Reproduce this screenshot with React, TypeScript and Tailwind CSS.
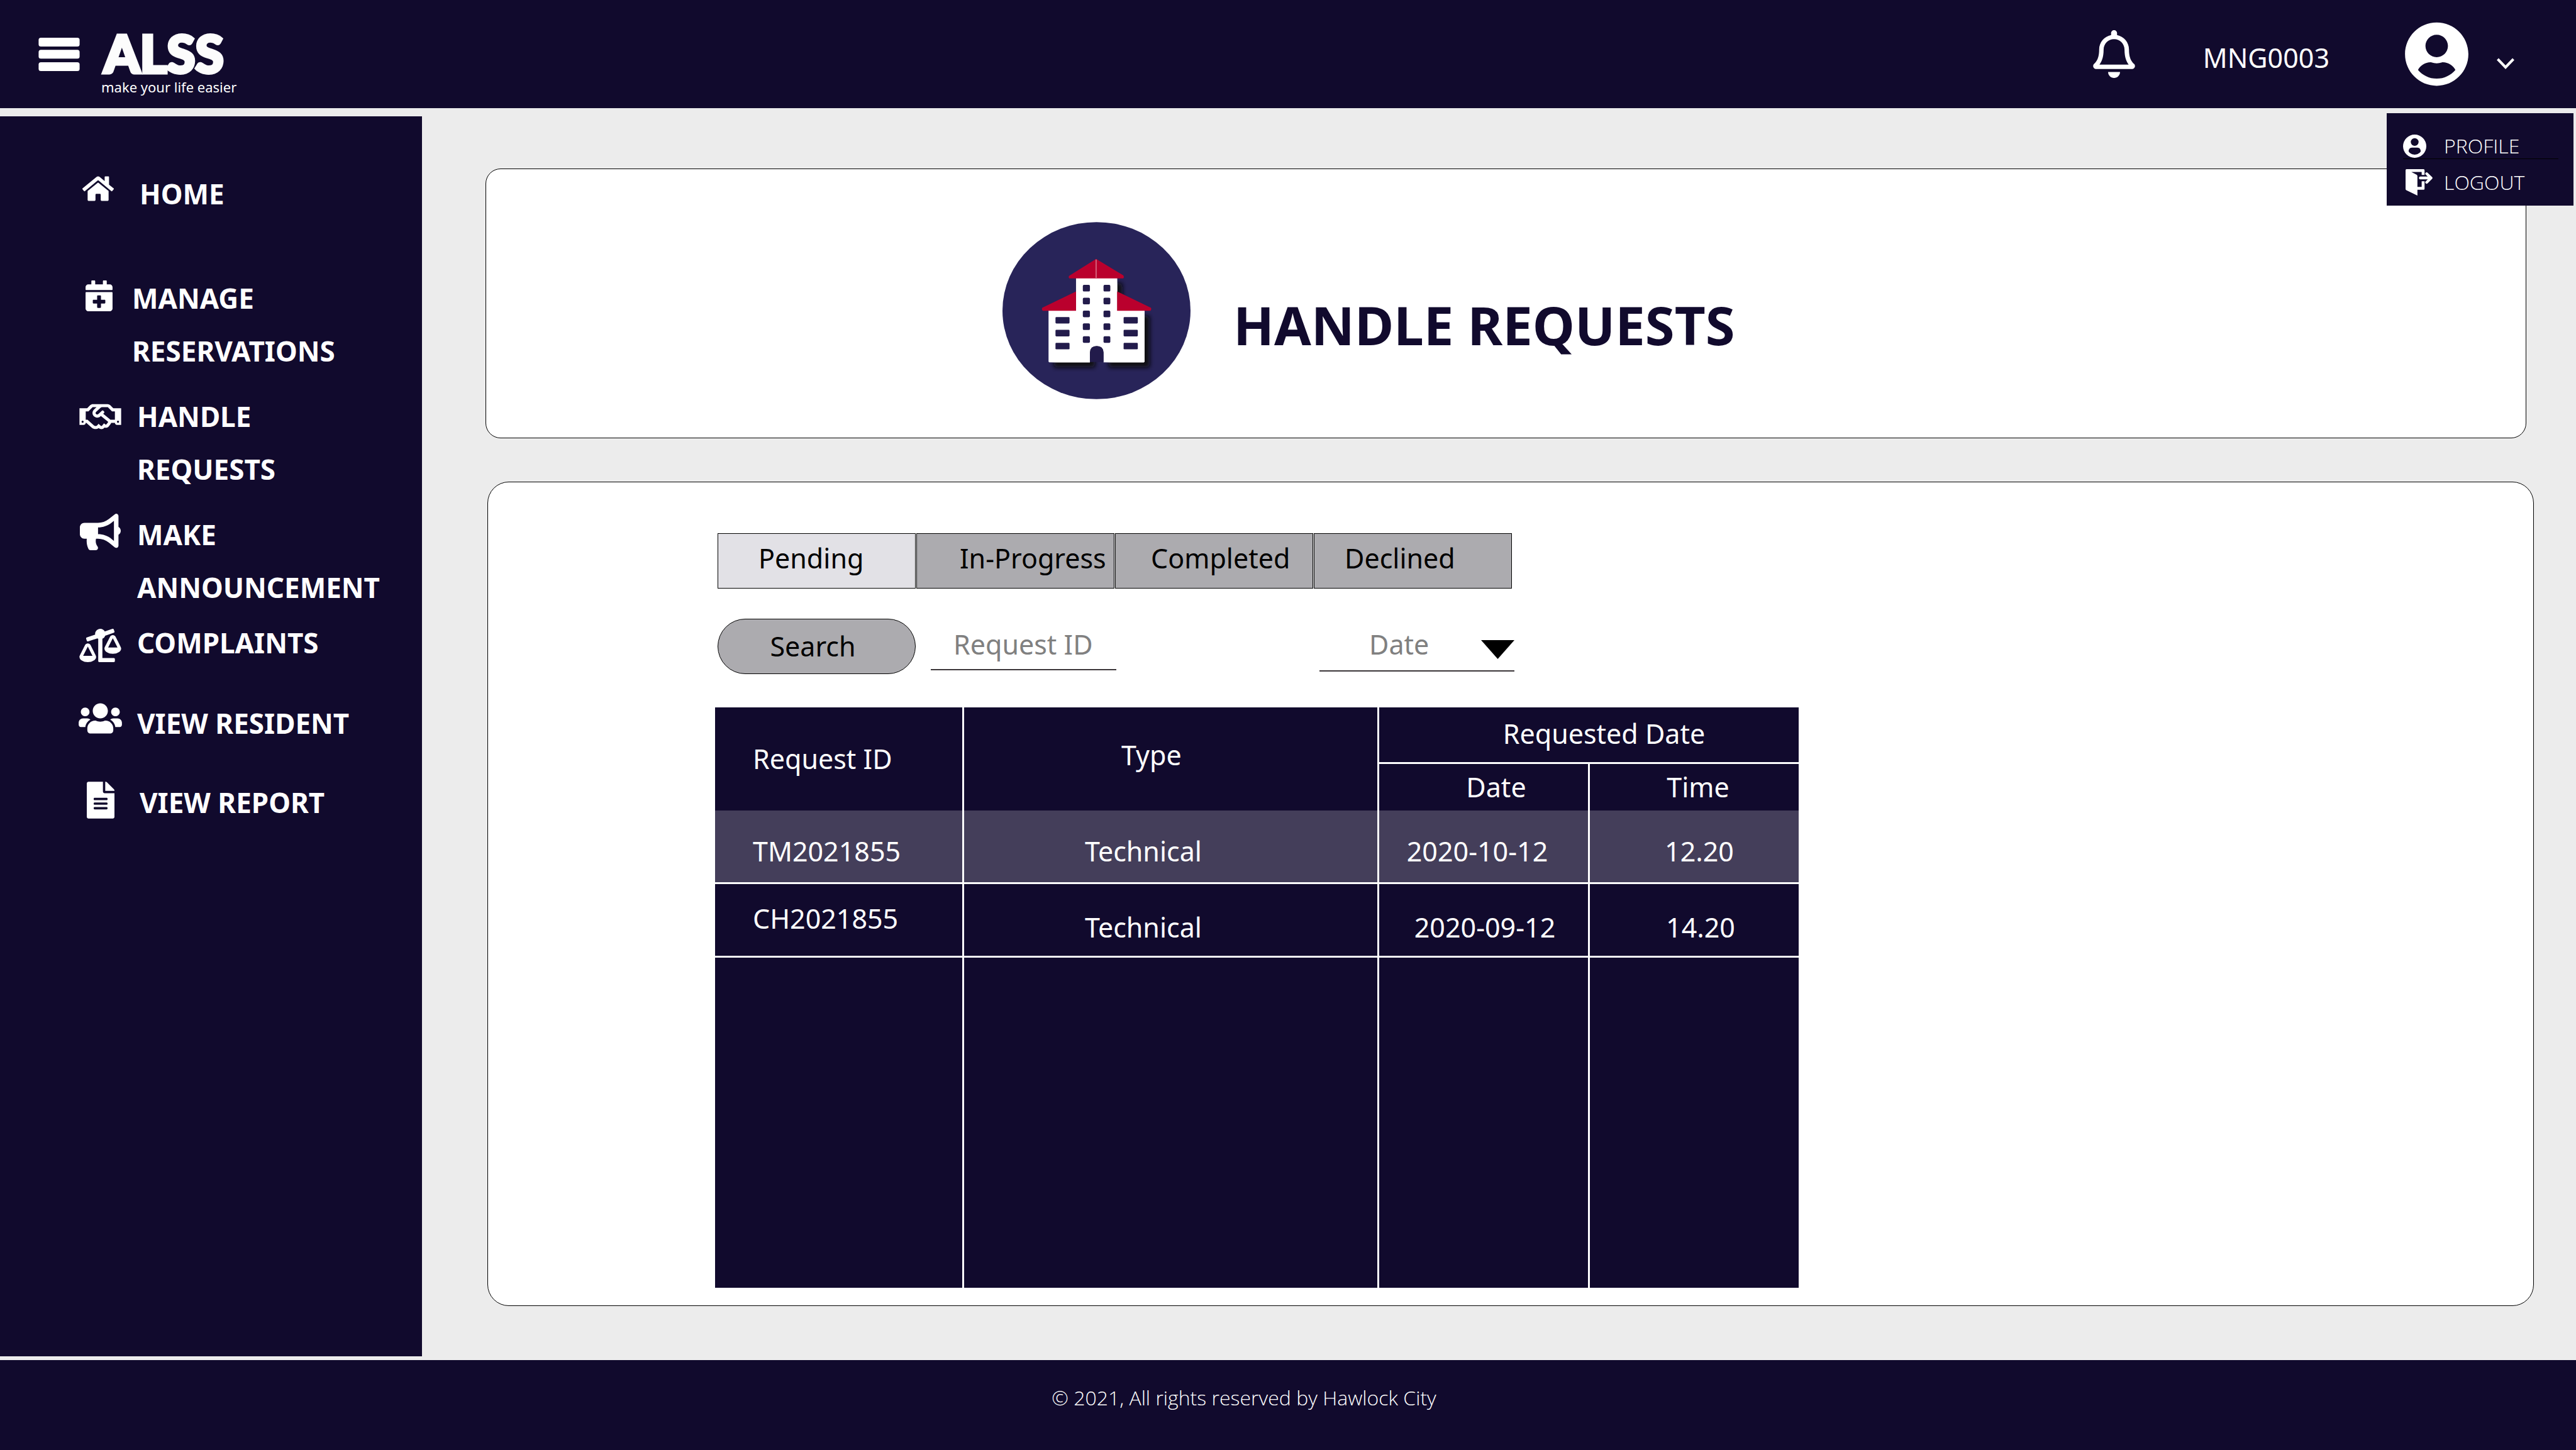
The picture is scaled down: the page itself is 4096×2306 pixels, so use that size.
import type { ReactNode } from "react";
import {
  FaBalanceScaleLeft,
  FaBullhorn,
  FaCalendarPlus,
  FaFileAlt,
  FaHome,
  FaRegBell,
  FaRegHandshake,
  FaUserCircle,
  FaUsers,
} from "react-icons/fa";

type NavItem = {
  icon: ReactNode;
  iconBox: string;
  lines: string[];
  spacing: string;
};

const navItems: NavItem[] = [
  { icon: <FaHome className="h-[50px] w-[50px]" />, iconBox: "pb-4 pr-2", lines: ["HOME"], spacing: "gap-7" },
  {
    icon: <FaCalendarPlus className="h-[49px] w-[43px]" />,
    iconBox: "pb-2 pr-1",
    lines: ["MANAGE", "RESERVATIONS"],
    spacing: "gap-4 mt-[82px]",
  },
  {
    icon: <FaRegHandshake className="h-[53px] w-[67px]" />,
    iconBox: "",
    lines: ["HANDLE", "REQUESTS"],
    spacing: "gap-6 mt-5",
  },
  {
    icon: <FaBullhorn className="h-[58px] w-[65px]" />,
    iconBox: "pb-2",
    lines: ["MAKE", "ANNOUNCEMENT"],
    spacing: "gap-6 mt-5",
  },
  {
    icon: <FaBalanceScaleLeft className="h-[53px] w-[67px]" />,
    iconBox: "pt-2",
    lines: ["COMPLAINTS"],
    spacing: "gap-6 mt-1",
  },
  {
    icon: <FaUsers className="h-[55px] w-[69px]" />,
    iconBox: "pb-4",
    lines: ["VIEW RESIDENT"],
    spacing: "gap-6 mt-11",
  },
  {
    icon: <FaFileAlt className="h-[59px] w-[44px]" />,
    iconBox: "pb-2",
    lines: ["VIEW REPORT"],
    spacing: "gap-7 mt-[42px]",
  },
];

const tabs = [
  { label: "Pending", look: "bg-[#e2e1e6] pl-16", selected: true },
  { label: "In-Progress", look: "bg-[#acabaf] pl-17", selected: false },
  { label: "Completed", look: "bg-[#acabaf] pl-14", selected: false },
  { label: "Declined", look: "bg-[#acabaf] pl-12", selected: false },
];

function MenuBars() {
  return (
    <svg viewBox="0 0 91 74" className="h-[53px] w-[66px]" fill="#fff" aria-hidden="true">
      <rect x="0" y="0" width="91" height="19.500" rx="5" />
      <rect x="0" y="27" width="91" height="19.500" rx="5" />
      <rect x="0" y="54.500" width="91" height="19.500" rx="5" />
    </svg>
  );
}

function ProfileIcon() {
  return (
    <svg viewBox="0 0 52 52" className="h-[37px] w-[37px]" fill="#fff" aria-hidden="true">
      <path
        fillRule="evenodd"
        d="M26 0a26 26 0 1 0 0 52a26 26 0 1 0 0-52zM26 8a8.700 8.700 0 1 1 0 17.400a8.700 8.700 0 1 1 0-17.400zM20 29h12c5 0 7.500 4 7.500 8.500C37 42 31 44.800 26 44.800S15 42 12.500 37.500C12.500 33 15 29 20 29z"
      />
    </svg>
  );
}

function LogoutIcon() {
  return (
    <svg viewBox="0 0 178 174" className="h-[42px] w-[43px]" fill="#fff" aria-hidden="true">
      <path d="M6 0H118Q125 0 125 7V38H106V19H38L72 36Q78 39 78 45V117H106V80H125V129Q125 136 118 136H78V174L5 139Q0 136 0 130V7Q0 0 6 0z" />
      <path
        d="M97 58H166M139 30L168 58L139 87"
        fill="none"
        stroke="#fff"
        strokeWidth="18"
        strokeLinecap="round"
        strokeLinejoin="round"
      />
    </svg>
  );
}

function BuildingBadge() {
  const rows = [478, 563, 648, 733, 818];
  const sideRows = [691, 776, 862];
  return (
    <svg viewBox="45 62 1245 1173" className="h-[282px] w-[299px] shrink-0" aria-hidden="true">
      <defs>
        <filter id="building-shadow" x="-20%" y="-20%" width="150%" height="150%">
          <feDropShadow dx="34" dy="34" stdDeviation="16" floodColor="#08070f" floodOpacity="0.95" />
        </filter>
      </defs>
      <ellipse cx="667.500" cy="648.500" rx="622.500" ry="586.500" fill="#282459" />
      <g filter="url(#building-shadow)">
        <path
          fill="#fff"
          d="M532 432H805V648H986V985Q986 991 980 991H714V925Q712 883 669 883Q626 883 624 925V991H356Q350 991 350 985V648H532z"
        />
      </g>
      <path fill="#221b4b" d="M624 989V925Q626 883 669 883Q712 883 714 925V989z" />
      <path fill="#ba002d" d="M665 306L844 414Q850 420 848 430L844 435H488Q480 430 486 418z" />
      <path fill="#dd8096" d="M662 310h6v122h-6z" />
      <path fill="#ba002d" d="M532 521V650H312Q303 642 308 630z" />
      <path fill="#ba002d" d="M804 521V650H1024Q1033 642 1028 630z" />
      <g fill="#221b4b">
        {rows.map((y) => (
          <g key={y}>
            <rect x="577" y={y} width="47" height="44" rx="8" />
            <rect x="714" y={y} width="45" height="44" rx="8" />
          </g>
        ))}
        {sideRows.map((y) => (
          <g key={y}>
            <rect x="396" y={y} width="93" height="43" rx="6" />
            <rect x="847" y={y} width="94" height="43" rx="6" />
          </g>
        ))}
      </g>
    </svg>
  );
}

function Header() {
  return (
    <header className="relative z-10 flex h-[172px] items-center bg-[#110a2d] pr-[98px] pl-[61px] text-white">
      <button type="button" aria-label="Toggle navigation">
        <MenuBars />
      </button>
      <a href="#home" className="ml-[34px] flex flex-col pt-5">
        <span className="pl-1 font-['Lato',sans-serif] text-[82px] leading-[84px] font-black text-[#fcfcfc] [-webkit-text-stroke:5px_#fcfcfc]">
          ALSS
        </span>
        <span className="text-[22px] leading-6">make your life easier</span>
      </a>
      <button type="button" aria-label="Notifications" className="ml-auto">
        <FaRegBell className="h-[76px] w-[67px]" />
      </button>
      <span className="ml-[108px] pt-3 text-[43px] leading-[60px]">MNG0003</span>
      <button type="button" aria-label="Account menu" aria-expanded="true" className="ml-[120px] flex items-center gap-[45px]">
        <FaUserCircle className="h-[104px] w-[101px]" />
        <svg viewBox="0 0 28 50" className="h-[50px] w-7" fill="none" stroke="#fff" strokeWidth="4" aria-hidden="true">
          <path d="M1.500 33L14 46L26.500 33" />
        </svg>
      </button>
      <nav
        aria-label="Account"
        className="absolute top-[180px] right-1 w-[297px] bg-[#110a2d] pt-8 pr-6 pb-4 pl-[26px] font-['Open_Sans',sans-serif] text-[32px] leading-10 font-light"
      >
        <a href="#profile" className="flex items-center gap-7 border-b border-black">
          <ProfileIcon />
          PROFILE
        </a>
        <a href="#logout" className="mt-4 flex items-center gap-[18px] pl-1">
          <LogoutIcon />
          LOGOUT
        </a>
      </nav>
    </header>
  );
}

function Sidebar() {
  return (
    <aside className="mt-[13px] mb-[6px] w-[671px] shrink-0 bg-[#110a2d] pt-[81px] pl-[125px] text-white">
      <nav aria-label="Main" className="flex flex-col">
        {navItems.map((item) => (
          <a key={item.lines[0]} href="#" className={`flex items-start ${item.spacing}`}>
            <span className={`flex h-[84px] w-[69px] shrink-0 items-center justify-center ${item.iconBox}`}>
              {item.icon}
            </span>
            <span className="text-[44px] leading-[84px] font-bold">
              {item.lines.map((line) => (
                <span key={line} className="block whitespace-nowrap">
                  {line}
                </span>
              ))}
            </span>
          </a>
        ))}
      </nav>
    </aside>
  );
}

function RequestsTable() {
  return (
    <table className="mt-[53px] -ml-1 w-[1723px] table-fixed border-separate border-spacing-0 bg-[#110a2d] text-white">
      <colgroup>
        <col className="w-[393px]" />
        <col className="w-[660px]" />
        <col className="w-[335px]" />
        <col className="w-[335px]" />
      </colgroup>
      <thead>
        <tr className="h-[90px]">
          <th rowSpan={2} scope="col" className="pl-15 text-left font-normal">
            Request ID
          </th>
          <th rowSpan={2} scope="col" className="border-l-3 border-white pb-3 pl-[250px] text-left font-normal">
            Type
          </th>
          <th colSpan={2} scope="colgroup" className="border-b-3 border-l-3 border-white pb-1 pl-12 text-center font-normal">
            Requested Date
          </th>
        </tr>
        <tr className="h-[74px]">
          <th scope="col" className="border-l-3 border-white pl-10 text-center font-normal">
            Date
          </th>
          <th scope="col" className="border-l-3 border-white pl-3 text-center font-normal">
            Time
          </th>
        </tr>
      </thead>
      <tbody>
        <tr className="h-[117px] bg-[#443e5a]">
          <td className="border-b-3 border-white pt-4 pl-15">TM2021855</td>
          <td className="border-b-3 border-l-3 border-white pt-4 pl-48">Technical</td>
          <td className="border-b-3 border-l-3 border-white pt-4 pr-5 text-center">2020-10-12</td>
          <td className="border-b-3 border-l-3 border-white pt-4 pl-4 text-center">12.20</td>
        </tr>
        <tr className="h-[117px]">
          <td className="border-b-3 border-white pb-1 pl-15">CH2021855</td>
          <td className="border-b-3 border-l-3 border-white pt-6 pl-48">Technical</td>
          <td className="border-b-3 border-l-3 border-white pt-6 pl-1 text-center">2020-09-12</td>
          <td className="border-b-3 border-l-3 border-white pt-6 pl-5 text-center">14.20</td>
        </tr>
        <tr className="h-[525px]">
          <td />
          <td className="border-l-3 border-white" />
          <td className="border-l-3 border-white" />
          <td className="border-l-3 border-white" />
        </tr>
      </tbody>
    </table>
  );
}

function RequestsPanel() {
  return (
    <section className="mt-[69px] mr-[67px] ml-[104px] rounded-[34px] border border-black bg-white pt-[81px] pb-7 pl-[365px] text-[43px] leading-[60px]">
      <div role="tablist" className="flex gap-px text-black">
        {tabs.map((tab) => (
          <button
            key={tab.label}
            type="button"
            role="tab"
            aria-selected={tab.selected}
            className={`h-[88px] w-[315px] border border-black pb-2 text-left whitespace-nowrap ${tab.look}`}
          >
            {tab.label}
          </button>
        ))}
      </div>
      <form className="mt-12 flex items-start text-[#808080]">
        <button
          type="button"
          className="h-[88px] w-[315px] rounded-full border border-black bg-[#acabaf] pr-3 text-center text-black"
        >
          Search
        </button>
        <input
          type="text"
          aria-label="Request ID"
          placeholder="Request ID"
          className="ml-6 h-[82px] w-[295px] border-b-2 border-[#3a3538] bg-transparent pl-9 placeholder:text-[#808080]"
        />
        <div className="ml-[323px] flex h-[84px] w-[310px] items-center border-b-2 border-[#3a3538]">
          <select aria-label="Date" className="h-full flex-1 appearance-none bg-transparent pl-[79px]">
            <option>Date</option>
          </select>
          <svg viewBox="0 0 53 30" className="mt-4 h-[30px] w-[53px]" aria-hidden="true">
            <path d="M0 0H53L26.500 30z" />
          </svg>
        </div>
      </form>
      <RequestsTable />
    </section>
  );
}

export default function App() {
  return (
    <div className="flex min-h-screen flex-col bg-[#ececec] font-['Noto_Sans',sans-serif]">
      <Header />
      <div className="flex flex-1">
        <Sidebar />
        <main className="min-w-0 flex-1">
          <section className="mt-24 mr-[79px] ml-[101px] flex items-center gap-17 rounded-3xl border border-black bg-white pt-[84px] pb-[61px] pl-[821px]">
            <BuildingBadge />
            <h1 className="pt-11 text-[85px] leading-[100px] font-bold whitespace-nowrap text-[#110a2d]">
              HANDLE REQUESTS
            </h1>
          </section>
          <RequestsPanel />
        </main>
      </div>
      <footer className="bg-[#110a2d] px-8 pt-10 pb-[63px] text-center font-['Open_Sans',sans-serif] text-[32px] leading-10 font-light text-white">
        <p className="pr-[140px]">© 2021, All rights reserved by Hawlock City</p>
      </footer>
    </div>
  );
}
